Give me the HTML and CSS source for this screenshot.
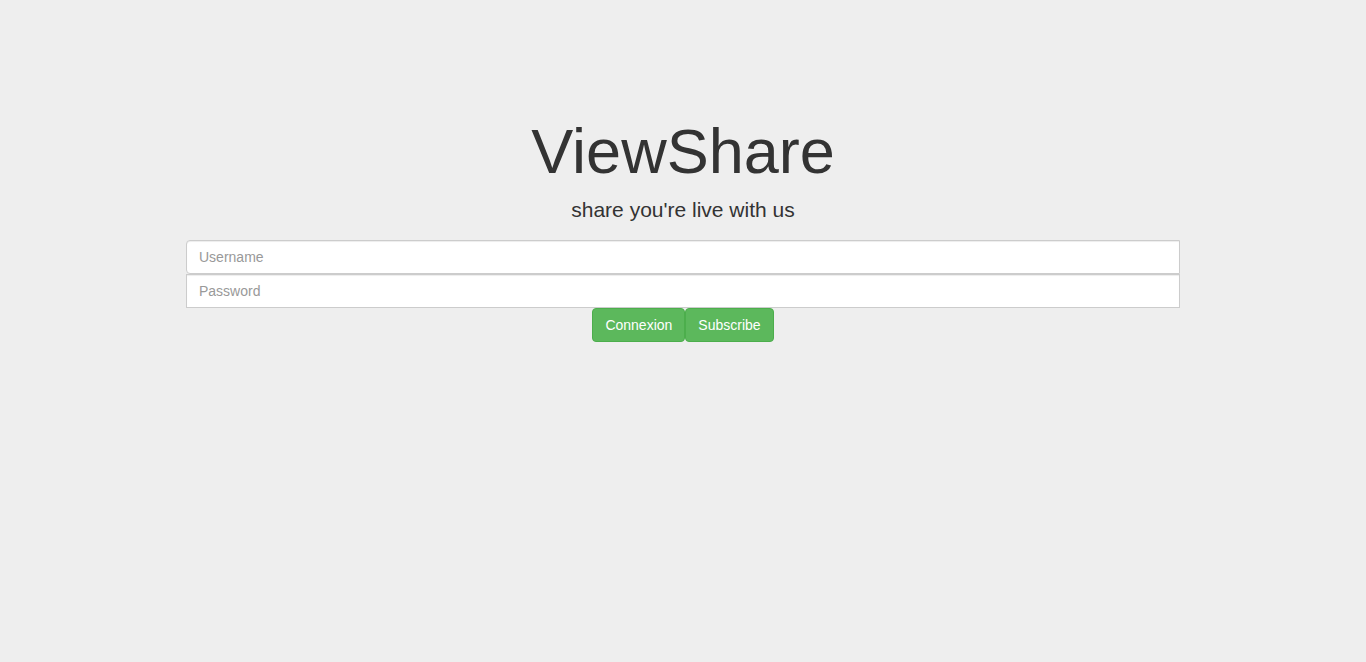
FILE: index.html
```html
<!DOCTYPE html>
<html>
<head>
<meta charset="utf-8">
<title>ViewShare</title>
<link rel="stylesheet" href="styles.css">
</head>
<body>
<main class="jumbotron">
  <h1 class="title">ViewShare</h1>
  <p class="lead">share you're live with us</p>
  <form class="login">
    <input class="field field-top" type="text" placeholder="Username">
    <input class="field field-bottom" type="password" placeholder="Password">
    <div class="actions">
      <button class="btn" type="button">Connexion</button>
      <button class="btn" type="button">Subscribe</button>
    </div>
  </form>
</main>
</body>
</html>
```
FILE: styles.css
```css
* { box-sizing: border-box; }
html, body {
  margin: 0;
  background: #eeeeee;
  height: 100%;
}
body {
  font-family: "Liberation Sans", Arial, Helvetica, sans-serif;
  color: #333333;
  font-size: 14px;
  line-height: 1.42857;
}
.jumbotron {
  display: flex;
  flex-direction: column;
  align-items: center;
  padding-top: 117px;
}
.title {
  margin: 0 0 9px;
  font-size: 63px;
  line-height: 69px;
  font-weight: 500;
  color: #333333;
}
.lead {
  margin: 0 0 15px;
  font-size: 21px;
  line-height: 30px;
  font-weight: 200;
}
.login {
  width: 994px;
  display: flex;
  flex-direction: column;
}
.field {
  display: block;
  width: 100%;
  height: 34px;
  padding: 6px 12px;
  font-family: inherit;
  font-size: 14px;
  line-height: 1.42857;
  color: #555555;
  background: #ffffff;
  border: 1px solid #cccccc;
  box-shadow: inset 0 1px 1px rgba(0,0,0,.075);
  outline: none;
}
.field::placeholder { color: #999999; }
.field-top { border-radius: 4px 0 0 4px; }
.field-bottom { border-radius: 0; }
.actions {
  display: flex;
  justify-content: center;
}
.btn {
  height: 34px;
  padding: 6px 12px;
  font-family: inherit;
  font-size: 14px;
  line-height: 20px;
  color: #ffffff;
  background: #5cb85c;
  border: 1px solid #4cae4c;
  border-radius: 4px;
  cursor: pointer;
}
```
